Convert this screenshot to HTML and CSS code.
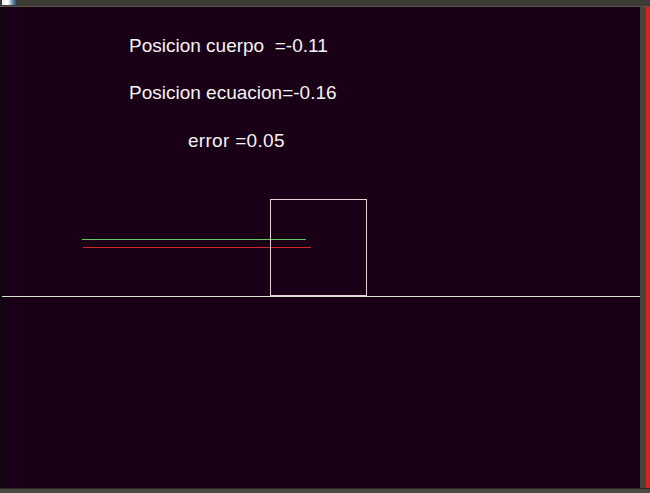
FILE: index.html
```html
<!DOCTYPE html>
<html>
<head>
<meta charset="utf-8">
<link rel="stylesheet" href="styles.css">
</head>
<body>
<div class="window">
  <div class="titlebar">
    <div class="appicon"></div>
  </div>
  <div class="middle">
    <div class="leftedge"></div>
    <div class="canvas">
      <div class="readouts">
        <p class="line l1">Posicion cuerpo&nbsp;&nbsp;=-0.11</p>
        <p class="line l2">Posicion ecuacion=-0.16</p>
        <p class="line l3">error =0.05</p>
      </div>
      <svg class="scene" width="638" height="481" viewBox="0 0 638 481" shape-rendering="crispEdges">
        <rect x="80" y="232" width="224" height="1" fill="#5ccc5c"/>
        <rect x="81" y="240" width="228" height="1" fill="#d02828"/>
        <rect x="268.5" y="192.5" width="96" height="96" fill="none" stroke="#e8d0d8" stroke-width="1"/>
        <rect x="0" y="289" width="638" height="1" fill="#d8e4d0"/>
      </svg>
    </div>
    <div class="rightedge"></div>
    <div class="redstrip"></div>
  </div>
  <div class="bottombar"></div>
</div>
</body>
</html>
```
FILE: styles.css
```css
html, body {
  margin: 0;
  padding: 0;
  background: #1a0017;
}
.window {
  width: 650px;
  height: 493px;
  display: flex;
  flex-direction: column;
  overflow: hidden;
}
.titlebar {
  height: 6px;
  background: #3c3c34;
  border-bottom: 1px solid #55554a;
  position: relative;
}
.appicon {
  position: absolute;
  left: 2px;
  top: 0;
  width: 15px;
  height: 5px;
  background: linear-gradient(90deg, #e8eef4 0%, #ffffff 40%, #6d8fb8 70%, #2a3a50 100%);
}
.middle {
  flex: 1;
  display: flex;
  min-height: 0;
}
.leftedge {
  width: 2px;
  background: #0c0a0a;
}
.canvas {
  width: 638px;
  position: relative;
  background: #1a0017;
}
.rightedge {
  width: 6px;
  background: #45453c;
}
.redstrip {
  width: 4px;
  background: #d42424;
}
.bottombar {
  height: 4px;
  background: #4a4a40;
  border-top: 1px solid #2a2a24;
}
.readouts {
  padding-top: 29px;
  padding-left: 127px;
}
.line {
  margin: 0;
  font-family: "Liberation Sans", Arial, sans-serif;
  font-size: 19px;
  line-height: 20px;
  color: #f4f4f4;
  white-space: nowrap;
}
.l2 { margin-top: 27px; }
.l3 { margin-top: 28px; padding-left: 59px; letter-spacing: 0.3px; }
.scene {
  position: absolute;
  left: 0;
  top: 0;
}
```
